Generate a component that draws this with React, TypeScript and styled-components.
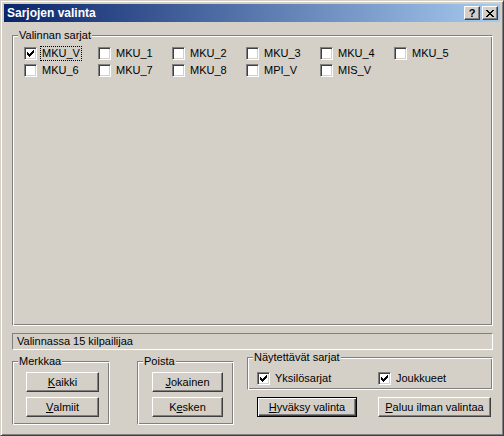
import React from "react";
import styled, { createGlobalStyle } from "styled-components";

const face = "#d4d0c8";
const shadow = "#808080";
const darkShadow = "#404040";

const GlobalStyle = createGlobalStyle`
  html, body {
    margin: 0;
    padding: 0;
    background: ${face};
  }
  body {
    font-family: "Liberation Sans", Arial, sans-serif;
    font-size: 11px;
    color: #000;
  }
`;

const Window = styled.div`
  width: 504px;
  height: 436px;
  box-sizing: border-box;
  background: ${face};
  border: 1px solid;
  border-color: ${face} ${darkShadow} ${darkShadow} ${face};
  box-shadow: inset 1px 1px #fff, inset -1px -1px ${shadow};
  padding: 3px;
  display: flex;
  flex-direction: column;
`;

const TitleBar = styled.div`
  height: 18px;
  flex: none;
  display: flex;
  align-items: center;
  padding: 0 2px 0 2px;
  background: linear-gradient(to right, #0a246a, #a6caf0);
  color: #fff;
  font-weight: bold;
  font-size: 12px;
`;

const TitleText = styled.span`
  flex: 1;
  padding-left: 1px;
`;

const TitleButtons = styled.div`
  display: flex;
  gap: 2px;
`;

const TitleButton = styled.div`
  width: 16px;
  height: 14px;
  box-sizing: border-box;
  background: ${face};
  border: 1px solid;
  border-color: #fff ${darkShadow} ${darkShadow} #fff;
  box-shadow: inset -1px -1px ${shadow};
  display: flex;
  align-items: center;
  justify-content: center;
  color: #000;
  font-weight: bold;
  font-size: 11px;
  line-height: 12px;
`;

const Client = styled.div`
  flex: 1;
  display: flex;
  flex-direction: column;
  padding: 13px 7px 0 8px;
`;

const GroupBox = styled.div<{ $w?: number; $h: number; $top?: number }>`
  position: relative;
  box-sizing: border-box;
  width: ${(p) => (p.$w ? `${p.$w}px` : "auto")};
  height: ${(p) => p.$h}px;
  margin-top: ${(p) => p.$top ?? 0}px;
  flex: none;
  border: 1px solid;
  border-color: ${shadow} #fff #fff ${shadow};
  box-shadow: inset 1px 1px #fff, inset -1px -1px ${shadow};
`;

const Legend = styled.span`
  position: absolute;
  top: -7px;
  left: 5px;
  padding: 0 1px;
  line-height: 13px;
  background: ${face};
  white-space: nowrap;
`;

const SeriesGrid = styled.div`
  display: grid;
  grid-template-columns: repeat(6, 74px);
  grid-auto-rows: 17px;
  padding: 11px 0 0 11px;
`;

const CheckItem = styled.label`
  display: flex;
  align-items: center;
  height: 13px;
  white-space: nowrap;
`;

const Box = styled.span`
  width: 13px;
  height: 13px;
  box-sizing: border-box;
  flex: none;
  background: #fff;
  border: 1px solid;
  border-color: ${shadow} #fff #fff ${shadow};
  box-shadow: inset 1px 1px ${darkShadow}, inset -1px -1px ${face};
  display: flex;
  padding: 2px;
`;

const CheckText = styled.span<{ $focused?: boolean }>`
  margin-left: 3px;
  padding: 0 1px;
  line-height: 13px;
  border: 1px ${(p) => (p.$focused ? "dotted #000" : "solid transparent")};
`;

const StatusField = styled.div`
  margin-top: 7px;
  height: 17px;
  box-sizing: border-box;
  border: 1px solid;
  border-color: ${shadow} #fff #fff ${shadow};
  padding-left: 4px;
  line-height: 15px;
`;

const BottomRow = styled.div`
  display: flex;
  align-items: flex-start;
  margin-top: 7px;
`;

const ButtonStack = styled.div<{ $left: number }>`
  display: flex;
  flex-direction: column;
  gap: 5px;
  padding: 10px 0 0 ${(p) => p.$left}px;
`;

const Button = styled.div<{ $w: number; $default?: boolean }>`
  width: ${(p) => p.$w}px;
  height: 20px;
  box-sizing: border-box;
  background: ${face};
  border: 1px solid;
  border-color: ${(p) =>
    p.$default ? "#000" : `#fff ${darkShadow} ${darkShadow} #fff`};
  box-shadow: ${(p) =>
    p.$default
      ? `inset 1px 1px #fff, inset -1px -1px ${darkShadow}, inset -2px -2px ${shadow}`
      : `inset -1px -1px ${shadow}`};
  display: flex;
  align-items: center;
  justify-content: center;
  line-height: 13px;
  white-space: nowrap;
`;

const RightColumn = styled.div`
  margin-left: 13px;
  width: 246px;
  display: flex;
  flex-direction: column;
`;

const ShowGrid = styled.div`
  display: grid;
  grid-template-columns: 121px 121px;
  padding: 14px 0 0 9px;
`;

const ActionRow = styled.div`
  display: flex;
  gap: 21px;
  margin-top: 7px;
  padding-left: 10px;
`;

const Spacer = styled.div<{ $w: number }>`
  width: ${(p) => p.$w}px;
  flex: none;
`;

const CheckMark = () => (
  <svg width="7" height="7" viewBox="0 0 7 7" shapeRendering="crispEdges">
    {[2, 3, 4, 3, 2, 1, 0].map((y, x) => (
      <rect key={x} x={x} y={y} width="1" height="3" fill="#000" />
    ))}
  </svg>
);

const CloseGlyph = () => (
  <svg width="8" height="7" viewBox="0 0 8 7" shapeRendering="crispEdges">
    {[
      [0, 0], [6, 0], [1, 1], [5, 1], [2, 2], [4, 2],
      [3, 3], [2, 4], [4, 4], [1, 5], [5, 5], [0, 6], [6, 6],
    ].map(([x, y], i) => (
      <rect key={i} x={x} y={y} width="2" height="1" fill="#000" />
    ))}
  </svg>
);

const Check = ({
  label,
  checked,
  focused,
}: {
  label: string;
  checked?: boolean;
  focused?: boolean;
}) => (
  <CheckItem>
    <Box>{checked && <CheckMark />}</Box>
    <CheckText $focused={focused}>{label}</CheckText>
  </CheckItem>
);

const series = [
  "MKU_V", "MKU_1", "MKU_2", "MKU_3", "MKU_4", "MKU_5",
  "MKU_6", "MKU_7", "MKU_8", "MPI_V", "MIS_V",
];

export default function App() {
  return (
    <>
      <GlobalStyle />
      <Window>
        <TitleBar>
          <TitleText>Sarjojen valinta</TitleText>
          <TitleButtons>
            <TitleButton>?</TitleButton>
            <TitleButton>
              <CloseGlyph />
            </TitleButton>
          </TitleButtons>
        </TitleBar>
        <Client>
          <GroupBox $h={291}>
            <Legend>Valinnan sarjat</Legend>
            <SeriesGrid>
              {series.map((s, i) => (
                <Check key={s} label={s} checked={i === 0} focused={i === 0} />
              ))}
            </SeriesGrid>
          </GroupBox>
          <StatusField>Valinnassa 15 kilpailijaa</StatusField>
          <BottomRow>
            <GroupBox $w={98} $h={64} $top={4}>
              <Legend>Merkkaa</Legend>
              <ButtonStack $left={13}>
                <Button $w={73}>
                  <u>K</u>aikki
                </Button>
                <Button $w={73}>
                  <u>V</u>almiit
                </Button>
              </ButtonStack>
            </GroupBox>
            <Spacer $w={27} />
            <GroupBox $w={97} $h={64} $top={4}>
              <Legend>Poista</Legend>
              <ButtonStack $left={14}>
                <Button $w={71}>
                  <u>J</u>okainen
                </Button>
                <Button $w={71}>
                  K<u>e</u>sken
                </Button>
              </ButtonStack>
            </GroupBox>
            <RightColumn>
              <GroupBox $h={33}>
                <Legend>Näytettävät sarjat</Legend>
                <ShowGrid>
                  <Check label="Yksilösarjat" checked />
                  <Check label="Joukkueet" checked />
                </ShowGrid>
              </GroupBox>
              <ActionRow>
                <Button $w={100} $default>
                  <u>H</u>yväksy valinta
                </Button>
                <Button $w={113}>
                  <u>P</u>aluu ilman valintaa
                </Button>
              </ActionRow>
            </RightColumn>
          </BottomRow>
        </Client>
      </Window>
    </>
  );
}
